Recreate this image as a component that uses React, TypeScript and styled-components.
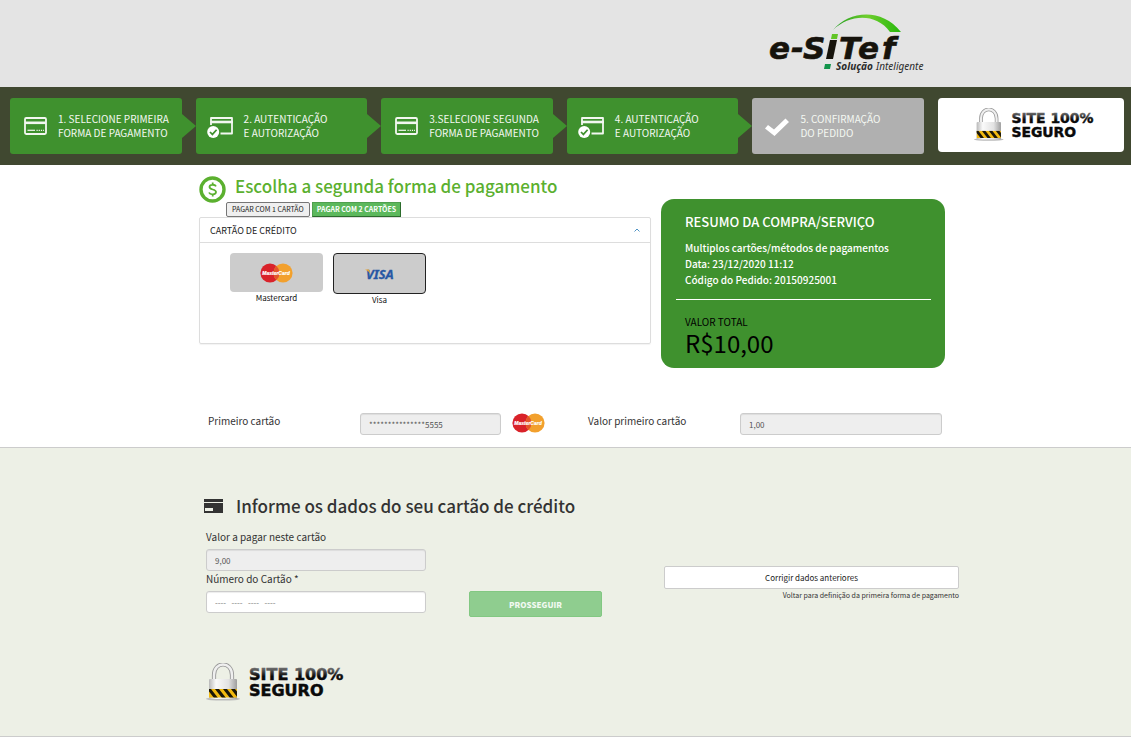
import React from "react";
import styled, { createGlobalStyle, css } from "styled-components";

const GlobalStyle = createGlobalStyle`
  *, *::before, *::after { box-sizing: border-box; }
  body {
    margin: 0;
    background: #fff;
    color: #333;
    font-family: "Noto Sans CJK SC", "Open Sans", sans-serif;
    font-size: 10px;
    line-height: 16px;
  }
  button, input { font-family: inherit; margin: 0; }
  h1, h2, h3, p, ol, dl, dd { margin: 0; padding: 0; font-weight: inherit; }
`;

const Container = styled.div`
  max-width: 789px;
  margin: 0 auto;
`;

/* ---------- header ---------- */

const Header = styled.header`
  background: #e4e4e4;
`;

const HeaderInner = styled(Container)`
  display: flex;
  justify-content: flex-end;
  padding: 12px 34px 13px 0;
  svg { display: block; }
`;

/* ---------- steps ---------- */

const StepsBar = styled.nav`
  background: #404830;
  padding: 11px 7px 11px 10px;
`;

const StepList = styled.ol`
  list-style: none;
  display: grid;
  grid-template-columns: repeat(5, minmax(0, 12fr)) minmax(0, 13fr);
  gap: 14px;
`;

const Step = styled.li<{ $pending?: boolean }>`
  position: relative;
  display: flex;
  align-items: center;
  gap: 10px;
  height: 56px;
  padding-left: 11px;
  border-radius: 3px;
  background: ${(p) => (p.$pending ? "#b0b0b0" : "#3f912e")};
  color: #f4f8f2;
  font-size: 10px;
  line-height: 14px;
  white-space: nowrap;

  ${(p) =>
    !p.$pending &&
    css`
      &::after {
        content: "";
        position: absolute;
        left: 100%;
        top: 16px;
        border-left: 14px solid #3f912e;
        border-top: 12px solid transparent;
        border-bottom: 12px solid transparent;
      }
    `}

  svg { flex: none; display: block; }
`;

const SecureBox = styled.li`
  display: flex;
  align-items: center;
  justify-content: center;
  height: 54px;
  padding-left: 6px;
  border-radius: 4px;
  background: #fff;
`;

/* ---------- payment choice ---------- */

const Choice = styled(Container)`
  display: flex;
  align-items: flex-start;
  gap: 10px;
  padding: 11px 15px 45px 28px;
`;

const Methods = styled.section`
  flex: 1;
  min-width: 0;
`;

const TitleRow = styled.div`
  display: flex;
  gap: 9px;
  height: 26px;
  svg { flex: none; }
`;

const Title = styled.h1`
  color: #5bb02f;
  font-size: 17px;
  font-weight: 500;
  line-height: 20px;
  white-space: nowrap;
`;

const Tabs = styled.div`
  display: flex;
  gap: 2px;
  padding-left: 27px;
`;

const Tab = styled.button<{ $active?: boolean }>`
  height: 15px;
  padding: 0 5px;
  font-size: 7px;
  line-height: 13px;
  white-space: nowrap;
  ${(p) =>
    p.$active
      ? css`
          padding: 0 4px;
          border: 1px solid;
          border-color: #4f9f4f #2c6b2c #2c6b2c #4f9f4f;
          background: #5cb85c;
          color: #fff;
          font-weight: 700;
        `
      : css`
          border: 1px solid #767676;
          border-radius: 2px;
          background: #efefef;
          color: #222;
        `}
`;

const Panel = styled.div`
  min-height: 127px;
  border: 1px solid #ddd;
  border-radius: 2px;
  box-shadow: 0 1px 1px rgba(0, 0, 0, 0.05);
`;

const PanelHead = styled.button`
  display: flex;
  width: 100%;
  align-items: center;
  justify-content: space-between;
  height: 25px;
  padding: 0 10px;
  border: 0;
  border-bottom: 1px solid #ddd;
  background: transparent;
  color: #222;
  font-size: 9px;
`;

const Brands = styled.div`
  display: flex;
  align-items: flex-start;
  gap: 10px;
  padding: 10px 30px;
`;

const Brand = styled.button`
  width: 93px;
  padding: 0;
  border: 0;
  background: none;
  color: #111;
  font-size: 8px;
  line-height: 12px;
`;

const BrandTile = styled.span<{ $selected?: boolean }>`
  display: flex;
  align-items: center;
  justify-content: center;
  height: ${(p) => (p.$selected ? 41 : 39)}px;
  border: ${(p) => (p.$selected ? "1px solid #222" : "0")};
  border-radius: 4px;
  background: #ccc;
`;

/* ---------- summary ---------- */

const Summary = styled.aside`
  flex: none;
  width: 284px;
  margin-top: 23px;
  padding: 14px 14px 11px 15px;
  border-radius: 13px;
  background: #3f912e;
  color: #fff;
`;

const SummaryTop = styled.div`
  padding: 0 9px 11px;
  border-bottom: 1px solid #fff;
  font-weight: 500;
`;

const SummaryTitle = styled.h2`
  margin-bottom: 9px;
  font-size: 13px;
  font-weight: 500;
  line-height: 18px;
`;

const SummaryTotal = styled.dl`
  padding: 15px 9px 0;
  color: #000;
  line-height: 14px;
  dd {
    font-size: 24px;
    line-height: 28px;
  }
`;

/* ---------- first card ---------- */

const FirstCardBand = styled.section`
  border-bottom: 1px solid #ccc;
`;

const FirstCard = styled(Container)`
  display: grid;
  grid-template-columns: 152px 141px 87px 152px 202px;
  padding: 0 18px 12px 37px;
`;

const Control = styled.input`
  display: block;
  width: 100%;
  height: 22px;
  padding: 0 8px;
  border: 1px solid #ccc;
  border-radius: 3px;
  background: #fff;
  box-shadow: inset 0 1px 1px rgba(0, 0, 0, 0.075);
  color: #555;
  font-size: 8px;
  &:read-only { background: #eee; }
  &::placeholder { color: #777; opacity: 1; }
`;

const BrandMark = styled.span`
  padding: 0 0 0 11px;
  svg { display: block; }
`;

/* ---------- form ---------- */

const FormBand = styled.section`
  border-bottom: 1px solid #ccc;
  background: #edf0e6;
`;

const FormInner = styled(Container)`
  padding: 46px 1px 33px 33px;
`;

const FormTitle = styled.h2`
  display: flex;
  align-items: center;
  gap: 13px;
  margin-bottom: 11px;
  color: #333;
  font-size: 17px;
  font-weight: 500;
  line-height: 24px;
`;

const Form = styled.form`
  display: flex;
  align-items: flex-end;
  padding-left: 2px;
`;

const Fields = styled.div`
  width: 220px;
  margin-right: 43px;
  label {
    display: block;
    padding-bottom: 4px;
    line-height: 16px;
  }
`;

const Submit = styled.button`
  width: 133px;
  height: 26px;
  margin-bottom: -4px;
  border: 1px solid #82c882;
  border-radius: 2px;
  background: #8fcd8f;
  color: #f1f9f1;
  font-size: 8px;
  font-weight: 900;
`;

const Back = styled.div`
  flex: 1;
  margin: 0 0 12px 62px;
  text-align: right;
`;

const BackButton = styled.button`
  display: block;
  width: 100%;
  height: 23px;
  border: 1px solid #ccc;
  border-radius: 2px;
  background: #fff;
  color: #222;
  font-size: 8px;
`;

const BackNote = styled.p`
  font-size: 7px;
  line-height: 12px;
`;

const FormSeal = styled.div`
  padding: 50px 0 0 2px;
  svg { display: block; }
`;

/* ---------- drawings ---------- */

const Logo = () => (
  <svg width="158" height="62" viewBox="0 0 158 62" role="img" aria-label="e-SiTef Solução Inteligente">
    <defs>
      <linearGradient id="arc" x1="0" x2="1">
        <stop offset="0" stopColor="#1c9a1c" />
        <stop offset="0.5" stopColor="#6fce2e" />
        <stop offset="1" stopColor="#27b80c" />
      </linearGradient>
    </defs>
    <path d="M65 18C81-1 113-5 133 20L122 20C108 1 82 2 65 18Z" fill="url(#arc)" />
    <g fontFamily="DejaVu Sans, sans-serif" fontWeight="700" fontStyle="italic" fontSize="31" fill="#16130c" stroke="#16130c" strokeWidth="0.6">
      <text x="1" y="47">e</text>
      <text x="23" y="47">-</text>
      <text x="35" y="47">S</text>
      <text x="71" y="47">T</text>
      <text x="90" y="47">e</text>
      <text x="114" y="47">f</text>
    </g>
    <path d="M62 28h7l-4 19h-7z" fill="#16130c" />
    <path d="M64 22h6l-1 5h-6z" fill="#62c526" />
    <path d="M57 52h6l-1 5h-6z" fill="#12944b" />
    <g fontFamily="Noto Sans, sans-serif" fontStyle="italic" fontSize="10" fill="#2b2b2b">
      <text x="68" y="58" fontWeight="700">Solução</text>
      <text x="108" y="58">Inteligente</text>
    </g>
  </svg>
);

const StepCard = () => (
  <svg width="27" height="20" viewBox="0 0 27 20" fill="none" stroke="#f2f7f0" aria-hidden="true">
    <rect x="4" y="2" width="21" height="16" rx="1.2" strokeWidth="1.8" />
    <path d="M4 6.8H25" strokeWidth="2.6" />
    <path d="M6.500 14.300H14" strokeWidth="1.200" />
    <path d="M15.500 14.300H23" strokeWidth="1.200" strokeDasharray="1.200 1" />
  </svg>
);

const StepCardCheck = () => (
  <svg width="27" height="24" viewBox="0 0 27 24" fill="none" aria-hidden="true">
    <path d="M4 11V4h21v15.500H13.500" stroke="#f2f7f0" strokeWidth="1.800" strokeLinejoin="round" />
    <path d="M3.500 8H26" stroke="#f2f7f0" strokeWidth="2.600" />
    <circle cx="6.200" cy="18" r="6" fill="#fff" />
    <path d="M3 18l2.400 2.400 4.200-4.600" stroke="#3f912e" strokeWidth="1.700" />
  </svg>
);

const StepCheck = () => (
  <svg width="27" height="20" viewBox="0 0 27 20" aria-hidden="true">
    <path d="M2 12.500 5 9l6 4.500L22.500 2.500 26 6 11.500 20Z" fill="#fff" />
  </svg>
);

const Seal = ({ id, width, height }: { id: string; width: number; height: number }) => (
  <svg width={width} height={height} viewBox="0 0 138 40" role="img" aria-label="Site 100% seguro">
    <defs>
      <linearGradient id={`${id}-body`} x1="0" x2="1">
        <stop offset="0" stopColor="#b9b9b9" />
        <stop offset="0.25" stopColor="#fafafa" />
        <stop offset="0.7" stopColor="#e2e2e2" />
        <stop offset="1" stopColor="#9e9e9e" />
      </linearGradient>
      <linearGradient id={`${id}-ink`} x1="0" y1="0" x2="0" y2="1">
        <stop offset="0.2" stopColor="#666" />
        <stop offset="0.6" stopColor="#0a0a0a" />
      </linearGradient>
      <clipPath id={`${id}-clip`}>
        <path d="M3 26h28v8.500H3z" />
      </clipPath>
    </defs>
    <ellipse cx="17" cy="36" rx="17" ry="1.600" fill="#bbb" />
    <path d="M8 18v-6c0-14 18-14 18 0v6" fill="none" stroke="#999" strokeWidth="4.200" />
    <path d="M8 18v-6c0-14 18-14 18 0v6" fill="none" stroke="#efefef" strokeWidth="2.400" />
    <rect x="3" y="16" width="28" height="20" rx="1" fill={`url(#${id}-body)`} />
    <g clipPath={`url(#${id}-clip)`}>
      <path d="M3 26h28v9H3z" fill="#f2b90f" />
      <path d="M1 26h4l7 9H8zM9 26h4l7 9h-4zM17 26h4l7 9h-4zM25 26h4l7 9h-4z" fill="#1a1608" />
    </g>
    <g fontFamily="DejaVu Sans, Verdana, sans-serif" fontWeight="700" fontSize="16" strokeWidth="0.5">
      <text x="43" y="17" fill={`url(#${id}-ink)`} stroke={`url(#${id}-ink)`}>SITE 100%</text>
      <text x="43" y="33" fill="#0a0a0a" stroke="#0a0a0a">SEGURO</text>
    </g>
  </svg>
);

const MasterCard = () => (
  <svg width="33" height="20" viewBox="0 0 33 20" role="img" aria-label="MasterCard">
    <circle cx="10" cy="10" r="9.600" fill="#d9222a" />
    <circle cx="23" cy="10" r="9.600" fill="#f2a02d" />
    <path d="M16.500 3a9.600 9.600 0 0 1 0 14a9.600 9.600 0 0 1 0-14Z" fill="#e3552b" />
    <text x="16" y="12" textAnchor="middle" fontFamily="Liberation Sans, sans-serif" fontWeight="700" fontStyle="italic" fontSize="5" fill="#fff" stroke="#fff" strokeWidth="0.2">
      MasterCard
    </text>
  </svg>
);

const Visa = () => (
  <svg width="34" height="20" viewBox="0 0 34 20" role="img" aria-label="Visa">
    <text x="3" y="15" fontFamily="Noto Sans, sans-serif" fontWeight="700" fontStyle="italic" fontSize="13" fill="#2757a4" stroke="#2757a4" strokeWidth="0.3">
      VISA
    </text>
    <path d="M2 5.500H6l1.500 4.500Q5.500 6.600 2 5.500Z" fill="#e9a534" />
  </svg>
);

const Coin = () => (
  <svg width="27" height="27" viewBox="0 0 27 27" aria-hidden="true">
    <circle cx="13.500" cy="13.500" r="11.500" fill="#fff" stroke="#5bb02f" strokeWidth="3.400" />
    <path d="M17 10.300C16 8.300 10.500 8 10.500 11c0 3.200 6.500 1.800 6.500 5 0 3-6 2.900-7 .5M13.700 6.500v2.300M13.700 18v2.400" fill="none" stroke="#5bb02f" strokeWidth="1.800" />
  </svg>
);

const Chevron = () => (
  <svg width="6" height="4" viewBox="0 0 6 4" aria-hidden="true">
    <path d="M0.500 3.500 3 1l2.500 2.500" fill="none" stroke="#4f93c4" strokeWidth="1" />
  </svg>
);

const CardGlyph = () => (
  <svg width="19" height="14" viewBox="0 0 19 14" aria-hidden="true">
    <path d="M0 0h19v3H0zM0 4h19v10H0z" fill="#333" />
    <path d="M1 9h8v3H1z" fill="#edf0e6" />
  </svg>
);

/* ---------- page ---------- */

const steps = [
  { icon: <StepCard />, lines: ["1. SELECIONE PRIMEIRA", "FORMA DE PAGAMENTO"] },
  { icon: <StepCardCheck />, lines: ["2. AUTENTICAÇÃO", "E AUTORIZAÇÃO"] },
  { icon: <StepCard />, lines: ["3.SELECIONE SEGUNDA", "FORMA DE PAGAMENTO"] },
  { icon: <StepCardCheck />, lines: ["4. AUTENTICAÇÃO", "E AUTORIZAÇÃO"] },
  { icon: <StepCheck />, lines: ["5. CONFIRMAÇÃO", "DO PEDIDO"], pending: true },
];

export default function App() {
  return (
    <>
      <GlobalStyle />
      <Header>
        <HeaderInner>
          <Logo />
        </HeaderInner>
      </Header>

      <StepsBar>
        <StepList>
          {steps.map((s) => (
            <Step key={s.lines[0]} $pending={s.pending}>
              {s.icon}
              <span>
                {s.lines[0]}
                <br />
                {s.lines[1]}
              </span>
            </Step>
          ))}
          <SecureBox>
            <Seal id="top" width={120} height={35} />
          </SecureBox>
        </StepList>
      </StepsBar>

      <main>
        <Choice>
          <Methods>
            <TitleRow>
              <Coin />
              <Title>Escolha a segunda forma de pagamento</Title>
            </TitleRow>
            <Tabs>
              <Tab type="button">PAGAR COM 1 CARTÃO</Tab>
              <Tab type="button" $active>PAGAR COM 2 CARTÕES</Tab>
            </Tabs>
            <Panel>
              <PanelHead type="button" aria-expanded="true">
                CARTÃO DE CRÉDITO
                <Chevron />
              </PanelHead>
              <Brands>
                <Brand type="button">
                  <BrandTile>
                    <MasterCard />
                  </BrandTile>
                  Mastercard
                </Brand>
                <Brand type="button" aria-pressed="true">
                  <BrandTile $selected>
                    <Visa />
                  </BrandTile>
                  Visa
                </Brand>
              </Brands>
            </Panel>
          </Methods>

          <Summary>
            <SummaryTop>
              <SummaryTitle>RESUMO DA COMPRA/SERVIÇO</SummaryTitle>
              <p>Multiplos cartões/métodos de pagamentos</p>
              <p>Data: 23/12/2020 11:12</p>
              <p>Código do Pedido: 20150925001</p>
            </SummaryTop>
            <SummaryTotal>
              <dt>VALOR TOTAL</dt>
              <dd>R$10,00</dd>
            </SummaryTotal>
          </Summary>
        </Choice>

        <FirstCardBand>
          <FirstCard>
            <label htmlFor="first-card">Primeiro cartão</label>
            <Control id="first-card" readOnly value="***************5555" />
            <BrandMark>
              <MasterCard />
            </BrandMark>
            <label htmlFor="first-value">Valor primeiro cartão</label>
            <Control id="first-value" readOnly value="1,00" />
          </FirstCard>
        </FirstCardBand>

        <FormBand>
          <FormInner>
            <FormTitle>
              <CardGlyph />
              Informe os dados do seu cartão de crédito
            </FormTitle>
            <Form onSubmit={(e) => e.preventDefault()}>
              <Fields>
                <label htmlFor="amount">Valor a pagar neste cartão</label>
                <Control id="amount" readOnly value="9,00" />
                <label htmlFor="number">Número do Cartão *</label>
                <Control id="number" placeholder="----   ----   ----   ----" />
              </Fields>
              <Submit type="submit">PROSSEGUIR</Submit>
              <Back>
                <BackButton type="button">Corrigir dados anteriores</BackButton>
                <BackNote>Voltar para definição da primeira forma de pagamento</BackNote>
              </Back>
            </Form>
            <FormSeal>
              <Seal id="bottom" width={138} height={40} />
            </FormSeal>
          </FormInner>
        </FormBand>
      </main>
    </>
  );
}
